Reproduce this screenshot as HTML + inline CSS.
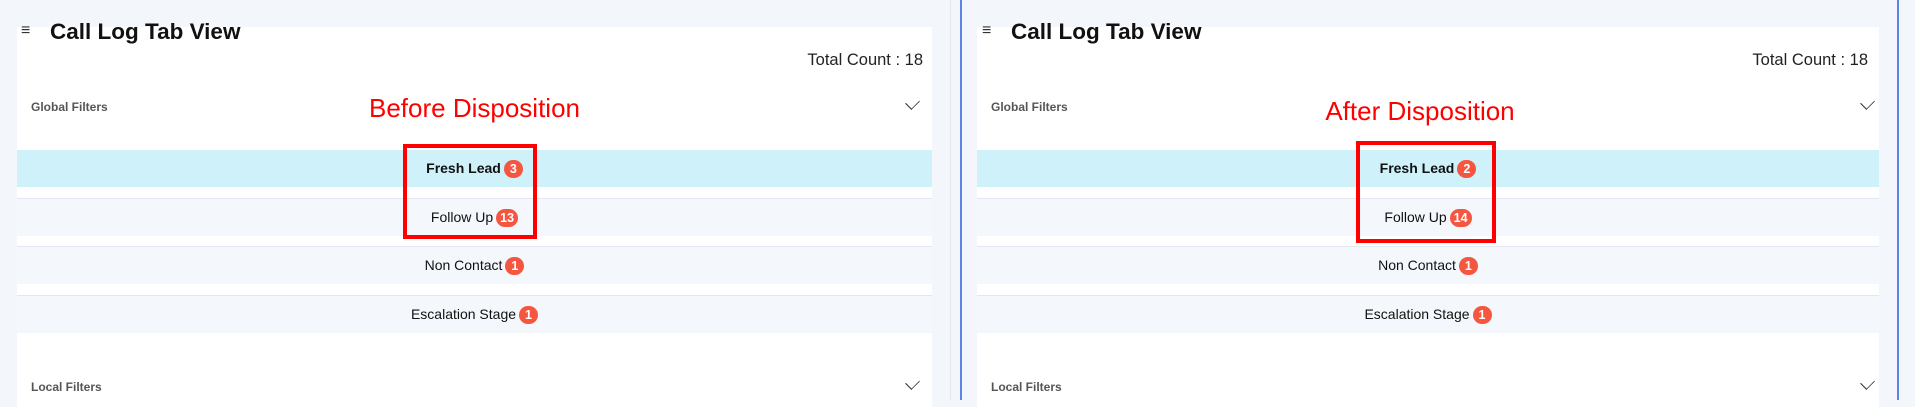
<!DOCTYPE html>
<html><head><style>
body{margin:0;width:1915px;height:400px;background:#f3f6fb;font-family:"Liberation Sans",sans-serif;position:relative;overflow:hidden}
.card{position:absolute;top:27px;height:380px;background:#fff}
.ab{position:absolute}
.title{font-size:22.5px;font-weight:bold;color:#111;top:19px}
.ham{font-size:16px;color:#333;top:22px}
.tc{font-size:16.5px;color:#222;top:51px;text-align:right}
.gf{font-size:12px;font-weight:bold;color:#555}
.chev{width:10px;height:10px;border-right:1.3px solid #333;border-bottom:1.3px solid #333;transform:rotate(45deg) scale(.8,1.1)}
.row{position:absolute;left:0;right:0;height:37px;background:#f4f7fc;border-top:1px solid #e3e8f0;text-align:center;font-size:14px;line-height:37px;color:#111}
.row.a{background:#cff1fa;border-top:none;font-weight:bold}
.b{display:inline-block;background:#f4563f;color:#fff;border-radius:9px;min-width:11px;padding:0 4px;height:18px;line-height:18px;font-size:12.5px;font-weight:bold;vertical-align:0px;margin-left:3px}
.red{color:#f00;font-size:26px;text-align:center}
.box{position:absolute;border:4px solid #f00;box-sizing:border-box}
</style></head><body>
<div class="ab" style="left:950px;top:0;width:1px;height:400px;background:#e2e6ee"></div>
<div class="ab" style="left:960px;top:0;width:1.5px;height:400px;background:#5b86e5"></div>
<div class="ab" style="left:1897px;top:0;width:1.5px;height:400px;background:#5b86e5"></div>

<div class="card" style="left:17px;width:915px">
 <div class="row a" style="top:123px">Fresh Lead<span class="b">3</span></div>
 <div class="row" style="top:171px">Follow Up<span class="b">13</span></div>
 <div class="row" style="top:219px">Non Contact<span class="b">1</span></div>
 <div class="row" style="top:268px">Escalation Stage<span class="b">1</span></div>
 <div class="ab gf" style="left:14px;top:73px">Global Filters</div>
 <div class="ab gf" style="left:14px;top:353px">Local Filters</div>
 <div class="ab chev" style="right:14px;top:70px"></div>
 <div class="ab chev" style="right:14px;top:350px"></div>
 <div class="ab red" style="left:350px;width:215px;top:66px">Before Disposition</div>
</div>
<div class="ab ham" style="left:21px">&#8801;</div>
<div class="ab title" style="left:50px">Call Log Tab View</div>
<div class="ab tc" style="right:992px">Total Count : 18</div>
<div class="box" style="left:403px;top:144px;width:134px;height:95px"></div>

<div class="card" style="left:977px;width:902px">
 <div class="row a" style="top:123px">Fresh Lead<span class="b">2</span></div>
 <div class="row" style="top:171px">Follow Up<span class="b">14</span></div>
 <div class="row" style="top:219px">Non Contact<span class="b">1</span></div>
 <div class="row" style="top:268px">Escalation Stage<span class="b">1</span></div>
 <div class="ab gf" style="left:14px;top:73px">Global Filters</div>
 <div class="ab gf" style="left:14px;top:353px">Local Filters</div>
 <div class="ab chev" style="right:6px;top:70px"></div>
 <div class="ab chev" style="right:6px;top:350px"></div>
 <div class="ab red" style="left:343px;width:200px;top:69px">After Disposition</div>
</div>
<div class="ab ham" style="left:982px">&#8801;</div>
<div class="ab title" style="left:1011px">Call Log Tab View</div>
<div class="ab tc" style="right:47px">Total Count : 18</div>
<div class="box" style="left:1356px;top:141px;width:140px;height:102px"></div>
</body></html>
